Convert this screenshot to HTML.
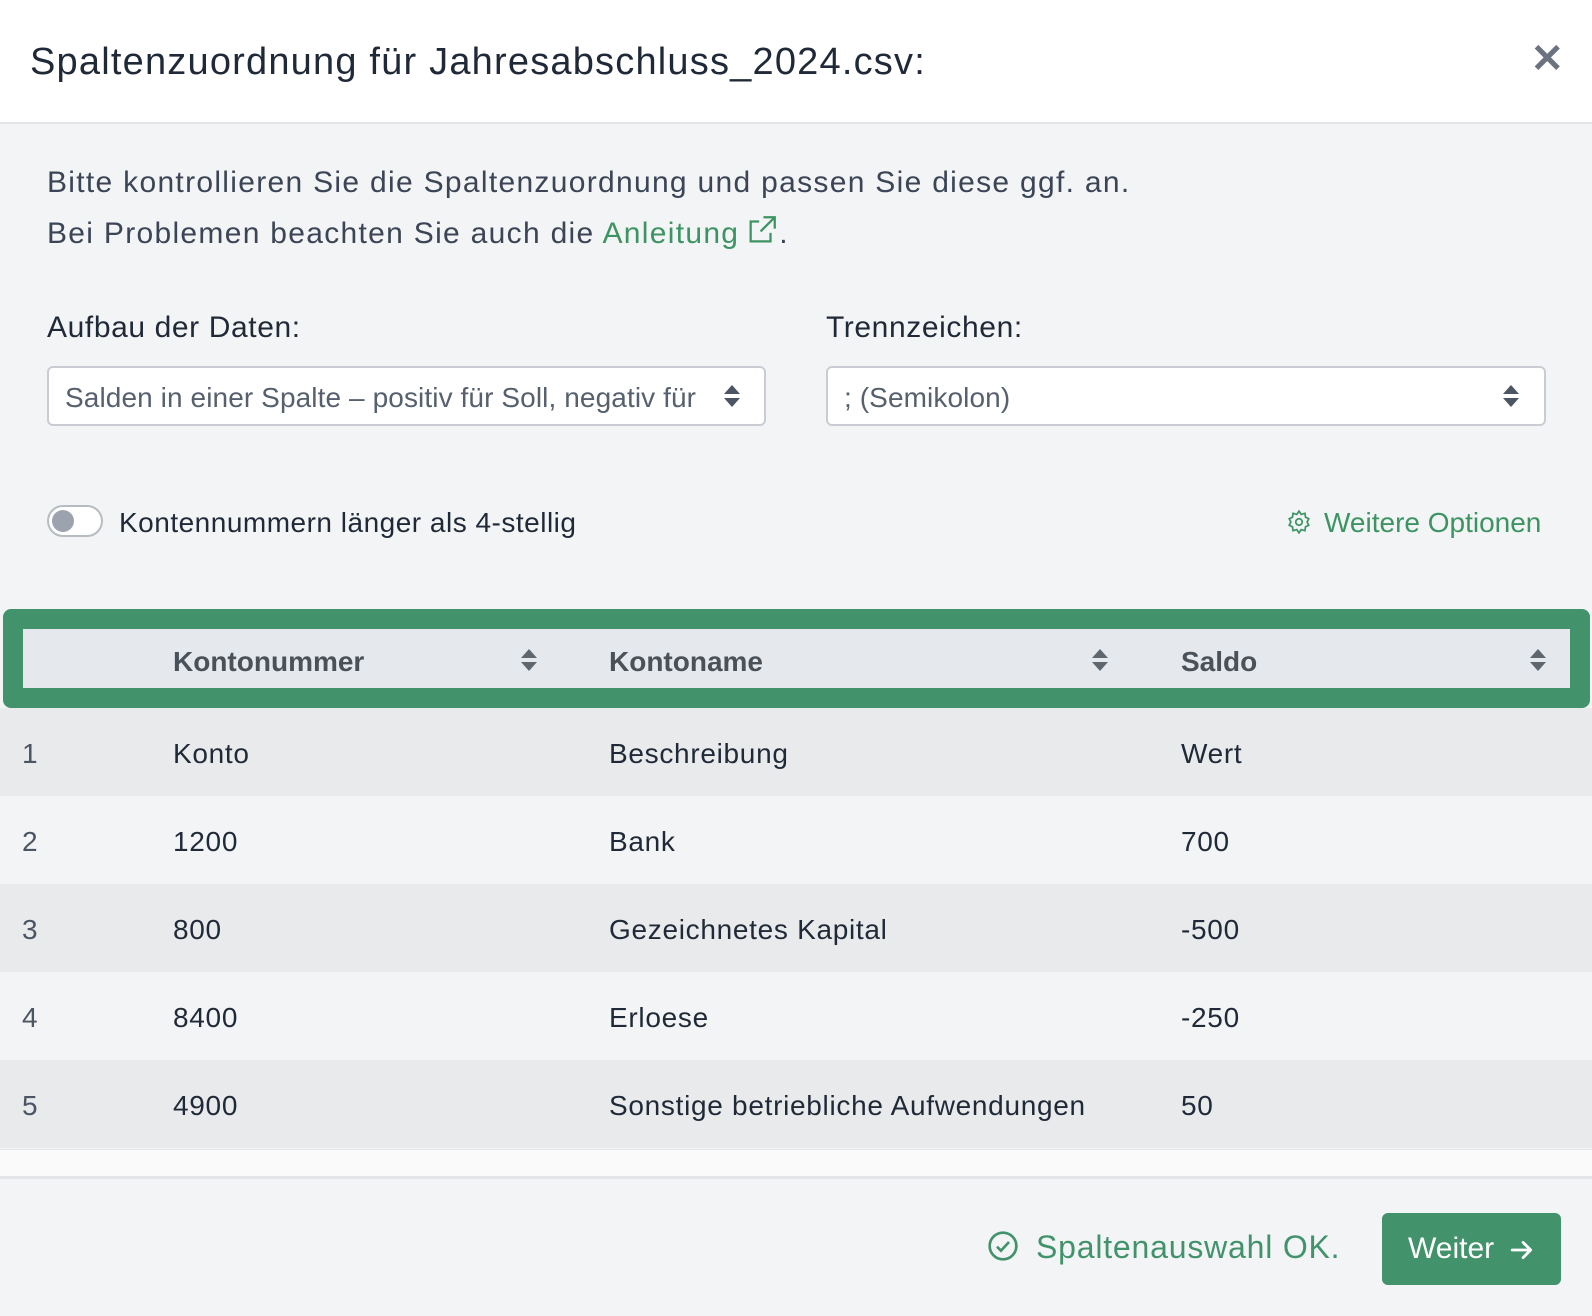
<!DOCTYPE html>
<html><head><meta charset="utf-8"><style>
*{box-sizing:border-box;margin:0;padding:0}
body{width:1592px;height:1316px;overflow:hidden;background:#f3f4f6;font-family:"Liberation Sans",sans-serif;color:#374151;position:relative}
.hdr{position:absolute;left:0;top:0;width:1592px;height:124px;background:#fff;border-bottom:2px solid #e2e4e8}
.title{position:absolute;left:30px;top:41px;font-size:38px;color:#1f2937;letter-spacing:1.2px}
.x{position:absolute;right:28px;top:36px;font-size:40px;color:#6b7280;font-weight:bold}
.t{position:absolute;font-size:30px;color:#3b4556;white-space:nowrap}
.sel{position:absolute;top:366px;height:60px;background:#fff;border:2px solid #c9cdd3;border-radius:6px;font-size:28px;color:#56606e;padding:14px 16px;white-space:nowrap;overflow:hidden;letter-spacing:0.1px}
.arr{position:absolute;width:0;height:0;border-left:8px solid transparent;border-right:8px solid transparent}
.up{border-bottom:9px solid #4b5563}.dn{border-top:9px solid #4b5563}
.row{position:absolute;left:0;width:1592px;height:88px;font-size:28px;color:#1f2937;letter-spacing:0.7px}
.row span{position:absolute;top:30px}
</style></head><body>
<div class="hdr"><div class="title">Spaltenzuordnung für Jahresabschluss_2024.csv:</div><div class="x">✕</div></div>
<div class="t" style="left:47px;top:166px;letter-spacing:1.3px">Bitte kontrollieren Sie die Spaltenzuordnung und passen Sie diese ggf. an.</div>
<div class="t" style="left:47px;top:213px;letter-spacing:1.3px">Bei Problemen beachten Sie auch die <span style="color:#3d9462">Anleitung</span><svg width="34" height="34" viewBox="0 0 24 24" style="vertical-align:-4px;margin-left:6px" fill="none" stroke="#3d9462" stroke-width="1.6"><path d="M13 3h8v8M21 3l-10 10M18 14v6H4V6h6"/></svg>.</div>
<div class="t" style="left:47px;top:311px;color:#1f2937;letter-spacing:0.6px">Aufbau der Daten:</div>
<div class="t" style="left:826px;top:311px;color:#1f2937;letter-spacing:0.6px">Trennzeichen:</div>
<div class="sel" style="left:47px;width:719px">Salden in einer Spalte – positiv für Soll, negativ für</div>
<div class="arr up" style="left:724px;top:385px"></div><div class="arr dn" style="left:724px;top:398px"></div>
<div class="sel" style="left:826px;width:720px">; (Semikolon)</div>
<div class="arr up" style="left:1503px;top:385px"></div><div class="arr dn" style="left:1503px;top:398px"></div>
<div style="position:absolute;left:47px;top:505px;width:56px;height:32px;border:2px solid #b7bcc3;border-radius:16px;background:#fff"><div style="position:absolute;left:3px;top:3px;width:22px;height:22px;border-radius:50%;background:#9ca3af"></div></div>
<div class="t" style="left:119px;top:507px;color:#1f2937;font-size:28px;letter-spacing:0.5px">Kontennummern länger als 4-stellig</div>
<svg style="position:absolute;left:1286px;top:509px" width="26" height="26" viewBox="0 0 24 24" fill="none" stroke="#3d9462" stroke-width="1.6"><circle cx="12" cy="12" r="3"/><path d="M12 2l2 3 3.5-1 .5 3.5 3 1.5-1.5 3 1.5 3-3 1.5-.5 3.5-3.5-1-2 3-2-3-3.5 1-.5-3.5-3-1.5 1.5-3-1.5-3 3-1.5.5-3.5 3.5 1z"/></svg>
<div class="t" style="left:1324px;top:507px;color:#3d9462;font-size:28px">Weitere Optionen</div>
<div style="position:absolute;left:3px;top:609px;width:1587px;height:99px;background:#42936b;border-radius:8px"></div>
<div style="position:absolute;left:23px;top:629px;width:1547px;height:59px;background:#e5e9ee"></div>
<div class="t" style="left:173px;top:646px;font-weight:bold;font-size:28px;color:#4b5158">Kontonummer</div>
<div class="t" style="left:609px;top:646px;font-weight:bold;font-size:28px;color:#4b5158">Kontoname</div>
<div class="t" style="left:1181px;top:646px;font-weight:bold;font-size:28px;color:#4b5158">Saldo</div>
<div class="arr up" style="left:521px;top:649px;border-bottom-color:#5f666d"></div><div class="arr dn" style="left:521px;top:662px;border-top-color:#5f666d"></div>
<div class="arr up" style="left:1092px;top:649px;border-bottom-color:#5f666d"></div><div class="arr dn" style="left:1092px;top:662px;border-top-color:#5f666d"></div>
<div class="arr up" style="left:1530px;top:649px;border-bottom-color:#5f666d"></div><div class="arr dn" style="left:1530px;top:662px;border-top-color:#5f666d"></div>
<div class="row" style="top:708px;background:#e9eaec"><span style="left:22px;color:#4b5563">1</span><span style="left:173px">Konto</span><span style="left:609px">Beschreibung</span><span style="left:1181px">Wert</span></div>
<div class="row" style="top:796px;background:#f3f4f6"><span style="left:22px;color:#4b5563">2</span><span style="left:173px">1200</span><span style="left:609px">Bank</span><span style="left:1181px">700</span></div>
<div class="row" style="top:884px;background:#e9eaec"><span style="left:22px;color:#4b5563">3</span><span style="left:173px">800</span><span style="left:609px">Gezeichnetes Kapital</span><span style="left:1181px">-500</span></div>
<div class="row" style="top:972px;background:#f3f4f6"><span style="left:22px;color:#4b5563">4</span><span style="left:173px">8400</span><span style="left:609px">Erloese</span><span style="left:1181px">-250</span></div>
<div class="row" style="top:1060px;background:#e9eaec"><span style="left:22px;color:#4b5563">5</span><span style="left:173px">4900</span><span style="left:609px">Sonstige betriebliche Aufwendungen</span><span style="left:1181px">50</span></div>
<div style="position:absolute;left:0;top:1149px;width:1592px;height:30px;background:#fafafa;border-top:1px solid #e5e7eb;border-bottom:3px solid #e2e4e8"></div>
<svg style="position:absolute;left:987px;top:1230px" width="32" height="32" viewBox="0 0 24 24" fill="none" stroke="#42936b" stroke-width="2"><circle cx="12" cy="12" r="10"/><path d="M7.5 12.5l3 3 6-6.5"/></svg>
<div class="t" style="left:1036px;top:1229px;color:#42936b;font-size:32px;letter-spacing:0.8px">Spaltenauswahl OK.</div>
<div style="position:absolute;left:1382px;top:1213px;width:179px;height:72px;background:#42936b;border-radius:6px;color:#fff;font-size:30px;line-height:72px;padding-left:26px">Weiter<svg width="26" height="26" viewBox="0 0 24 24" style="position:absolute;left:127px;top:24px" fill="none" stroke="#fff" stroke-width="2.6" stroke-linecap="round" stroke-linejoin="round"><path d="M3 12h17M13 5l7 7-7 7"/></svg></div>
</body></html>
